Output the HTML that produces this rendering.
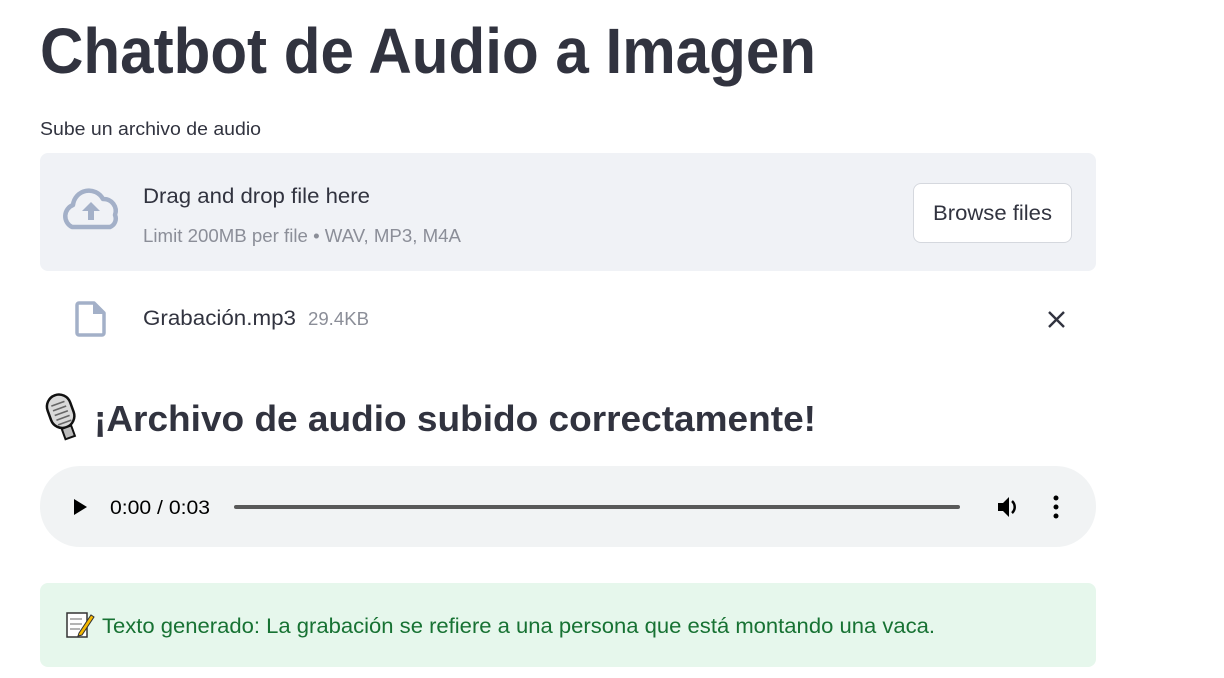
<!DOCTYPE html>
<html><head><meta charset="utf-8"><style>
body{margin:0;background:#fff;width:1224px;height:678px;overflow:hidden;position:relative;font-family:"Liberation Sans",sans-serif}
.box{position:absolute}
svg{position:absolute;left:0;top:0}
</style></head><body>
<div class="box" style="left:40px;top:153px;width:1056px;height:118px;background:#f0f2f6;border-radius:8px"></div>
<div class="box" style="left:913px;top:183px;width:157px;height:58px;background:#fff;border:1px solid #d5d8de;border-radius:8px"></div>
<div class="box" style="left:40px;top:466px;width:1056px;height:81px;background:#f1f3f4;border-radius:40px"></div>
<div class="box" style="left:40px;top:583px;width:1056px;height:84px;background:#e6f7ec;border-radius:8px"></div>
<svg width="1224" height="678" font-family="Liberation Sans, sans-serif">
<text x="40" y="73" font-size="64" font-weight="bold" fill="#31333f" textLength="776" lengthAdjust="spacingAndGlyphs">Chatbot de Audio a Imagen</text>
<text x="40" y="135" font-size="18" fill="#31333f" textLength="221" lengthAdjust="spacingAndGlyphs">Sube un archivo de audio</text>
<path d="M72 227 a12 12 0 0 1 1-22 a16 16 0 0 1 30-6 a12 12 0 0 1 12 16 a9 9 0 0 1-5 12 z" fill="none" stroke="#a3b0c8" stroke-width="4.5" stroke-linejoin="round"/>
<path d="M91 202 l-9 9 h6 v9 h6 v-9 h6 z" fill="#a3b0c8"/>
<text x="143" y="203" font-size="21" fill="#31333f" textLength="227" lengthAdjust="spacingAndGlyphs">Drag and drop file here</text>
<text x="143" y="242" font-size="18" fill="#8b8e98" textLength="318" lengthAdjust="spacingAndGlyphs">Limit 200MB per file • WAV, MP3, M4A</text>
<text x="933" y="220" font-size="21" fill="#31333f" textLength="119" lengthAdjust="spacingAndGlyphs">Browse files</text>
<path d="M79 303 h15 l10 10 v20 a2 2 0 0 1-2 2 h-23 a2 2 0 0 1-2-2 v-28 a2 2 0 0 1 2-2z" fill="none" stroke="#a3b0c8" stroke-width="3.5" stroke-linejoin="round"/>
<path d="M93 303 v11 h11z" fill="#a3b0c8"/>
<text x="143" y="325" font-size="21" fill="#31333f" textLength="153" lengthAdjust="spacingAndGlyphs">Grabación.mp3</text>
<text x="308" y="325" font-size="18" fill="#8b8e98" textLength="61" lengthAdjust="spacingAndGlyphs">29.4KB</text>
<path d="M1049 312 l15 15 M1064 312 l-15 15" stroke="#31333f" stroke-width="2.4"/>
<g transform="rotate(-20 62 415)">
<rect x="50" y="394" width="24" height="34" rx="12" fill="#d9d9d9" stroke="#111" stroke-width="2.5"/>
<path d="M55 403 h14 M55 408 h14 M55 413 h14 M55 418 h14 M55 423 h14" stroke="#666" stroke-width="1.6"/>
<rect x="57" y="428" width="10" height="11" fill="#bbb" stroke="#111" stroke-width="2"/>
</g>
<text x="94" y="431" font-size="36" font-weight="bold" fill="#31333f" textLength="722" lengthAdjust="spacingAndGlyphs">¡Archivo de audio subido correctamente!</text>
<path d="M74 499 l13 8 l-13 8z" fill="#000"/>
<text x="110" y="514" font-size="19" fill="#000" textLength="100" lengthAdjust="spacingAndGlyphs">0:00 / 0:03</text>
<rect x="234" y="505" width="726" height="4" rx="2" fill="#595959"/>
<path d="M998 503 h5 l6-6 v20 l-6-6 h-5z" fill="#000"/>
<path d="M1012 501 a8 8 0 0 1 0 12" fill="none" stroke="#000" stroke-width="2.5"/>
<circle cx="1056" cy="498" r="2.5" fill="#000"/><circle cx="1056" cy="507" r="2.5" fill="#000"/><circle cx="1056" cy="516" r="2.5" fill="#000"/>
<rect x="67" y="613" width="20" height="24" fill="#fff" stroke="#333" stroke-width="1.5"/>
<path d="M70 619 h12 M70 624 h12 M70 629 h10" stroke="#888" stroke-width="1.2"/>
<path d="M79 633 l12-18 l3 2 l-12 18 l-4 1z" fill="#f5b800" stroke="#333" stroke-width="1"/>
<text x="102" y="633" font-size="21" fill="#177233" textLength="833" lengthAdjust="spacingAndGlyphs">Texto generado: La grabación se refiere a una persona que está montando una vaca.</text>
</svg>
</body></html>
